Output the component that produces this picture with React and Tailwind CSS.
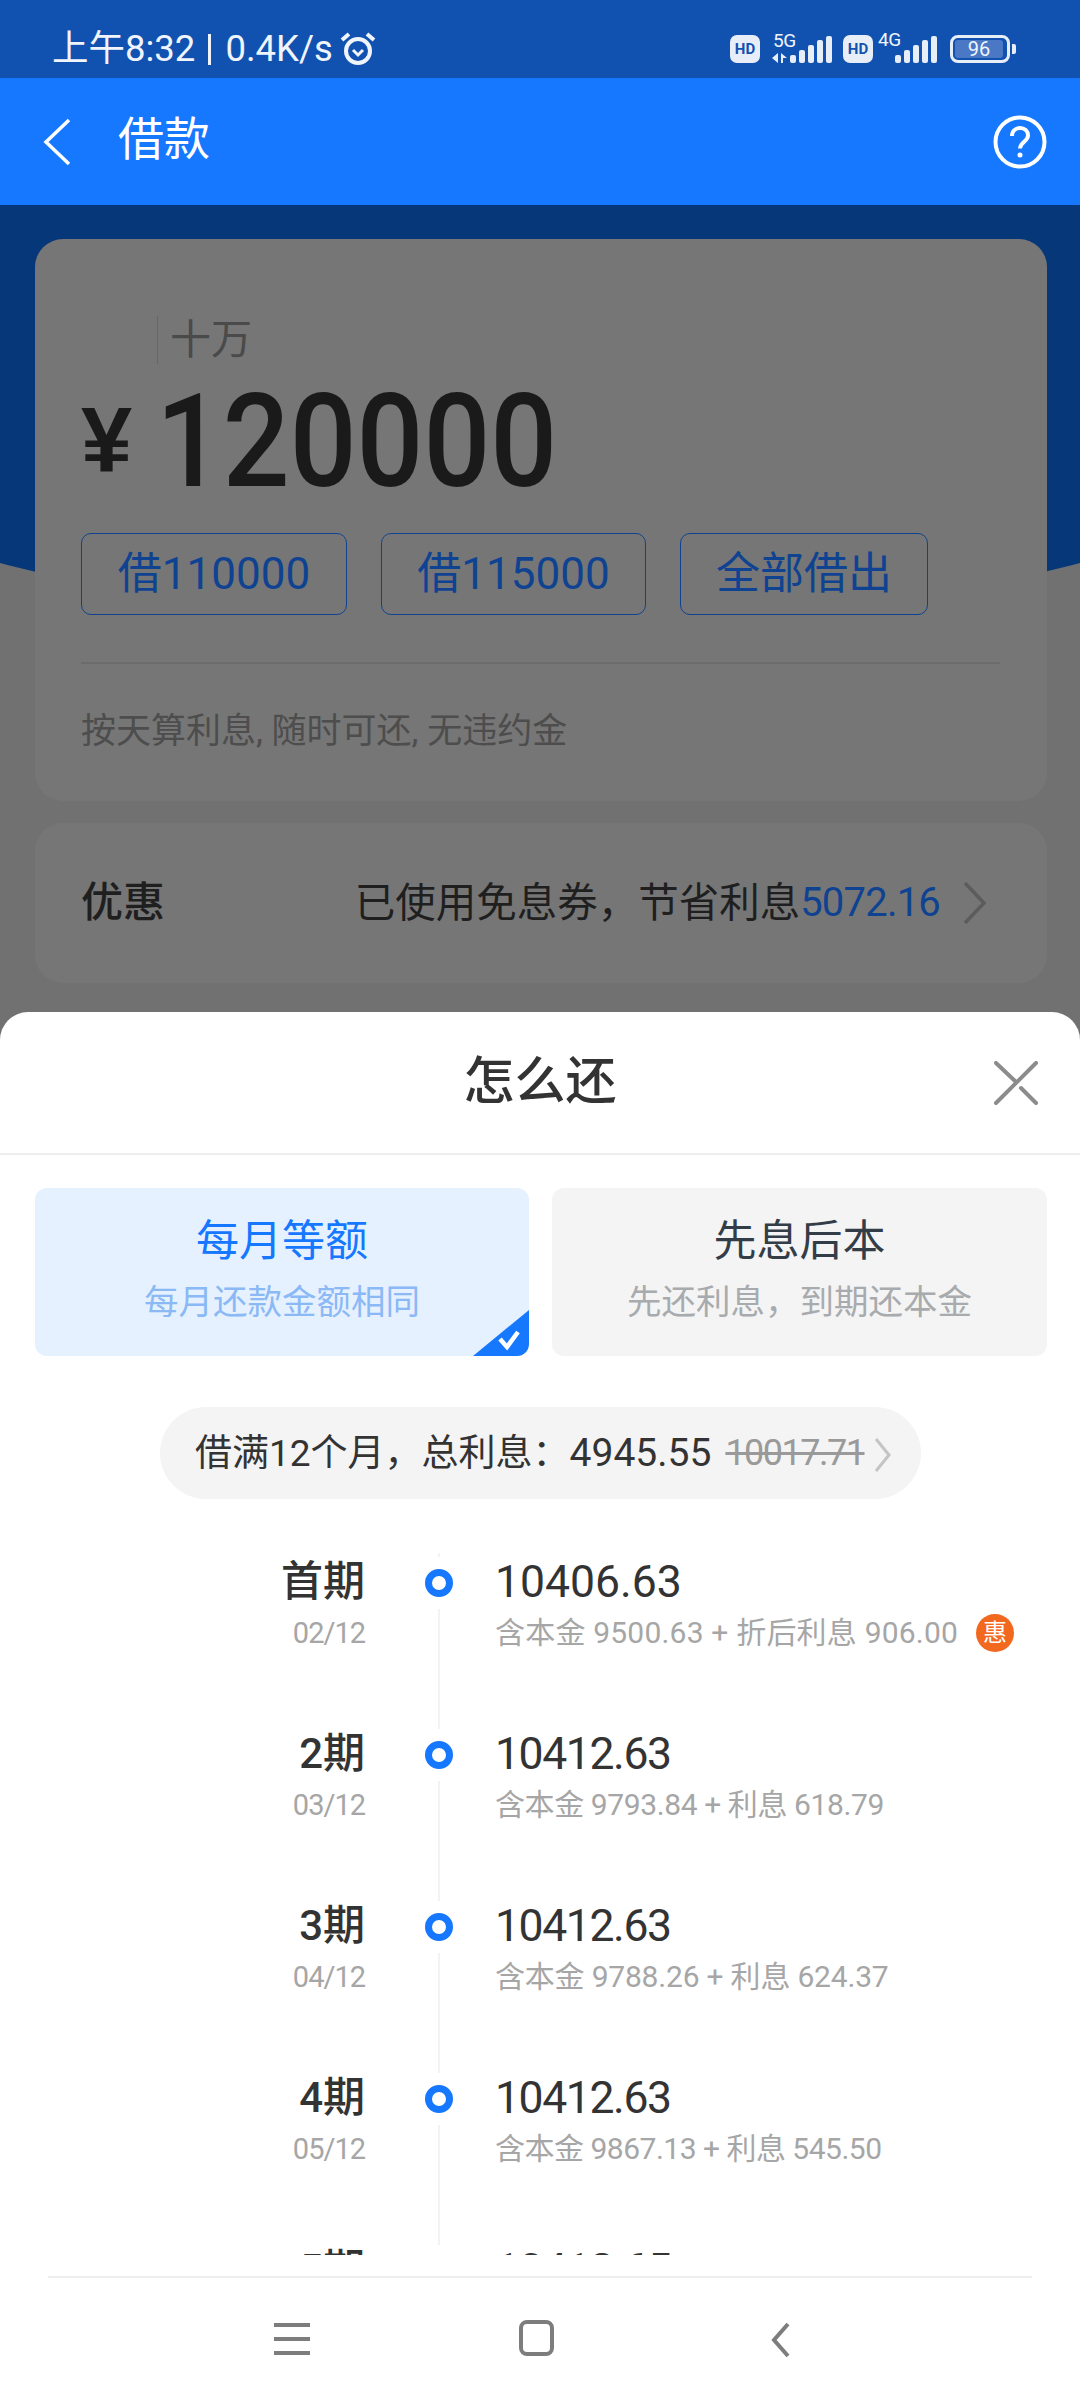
const FONT = "font-['Roboto','Noto_Sans_CJK_SC',sans-serif]";

const rows = [
  { p: "首期", d: "02/12", a: "10406.63", at: "tracking-[0px]", s: "含本金 9500.63 + 折后利息 906.00", st: "tracking-[0.2px]", hui: true },
  { p: "2期", d: "03/12", a: "10412.63", at: "tracking-[-1.4px]", s: "含本金 9793.84 + 利息 618.79", st: "tracking-[-0.4px]" },
  { p: "3期", d: "04/12", a: "10412.63", at: "tracking-[-1.4px]", s: "含本金 9788.26 + 利息 624.37", st: "tracking-[-0.2px]" },
  { p: "4期", d: "05/12", a: "10412.63", at: "tracking-[-1.4px]", s: "含本金 9867.13 + 利息 545.50", st: "tracking-[-0.5px]" },
  { p: "5期", a: "10412.65", at: "tracking-[-1.4px]" },
];

function Bars() {
  const h = [8, 13, 18, 23, 27];
  return (
    <div className="flex items-end gap-[3px]">
      {h.map((v) => (
        <div key={v} className="w-[6px] rounded-[2px] bg-[#e8eef8]" style={{ height: v }} />
      ))}
    </div>
  );
}

function HD() {
  return (
    <div className="w-[30px] h-[28px] rounded-[7px] bg-[#e8eef8] text-[#1252b0] text-[15px] font-bold flex items-center justify-center leading-none">HD</div>
  );
}

function StatusBar() {
  return (
    <div className="h-[78px] bg-[#1152b1] flex items-end justify-between pl-[52px] pr-[64px] pb-[9px] text-[#f0f4fb]">
      <div className="flex items-center h-[40px] text-[36.5px] leading-none">
        <span>上午8:32</span>
        <span className="w-[3px] h-[31px] bg-[#f0f4fb] ml-[13px] mr-[14px]" />
        <span>0.4K/s</span>
        <svg className="ml-[7px]" width="36" height="34" viewBox="0 0 36 34" fill="none" stroke="#f0f4fb">
          <circle cx="18" cy="19" r="12" strokeWidth="4" />
          <path d="M13 18l5 5 5-5" strokeWidth="3" />
          <path d="M2 8l7-6M34 8l-7-6" strokeWidth="4" />
        </svg>
      </div>
      <div className="flex items-end h-[40px] pb-[6px]">
        <HD />
        <div className="relative ml-[12px] w-[60px] h-[28px] flex items-end justify-end">
          <span className="absolute left-[1px] top-[-4px] text-[19px] leading-none tracking-[-0.5px]">5G</span>
          <svg className="absolute left-0 bottom-0" width="16" height="10" viewBox="0 0 16 10" fill="#e8eef8">
            <path d="M6 0v10L0 5zM9 0l6 5H11v5H9z" />
          </svg>
          <Bars />
        </div>
        <div className="ml-[11px]"><HD /></div>
        <div className="relative ml-[5px] w-[59px] h-[28px] flex items-end justify-end">
          <span className="absolute left-0 top-[-5px] text-[19px] leading-none tracking-[-0.5px]">4G</span>
          <Bars />
        </div>
        <div className="flex items-center ml-[13px]">
          <div className="w-[60px] h-[28px] rounded-[8px] border-[3px] border-[#e8eef8] p-[2px]">
            <div className="w-[48px] h-full rounded-[3px] bg-[#4a78c4] flex items-center justify-center text-[20px] leading-none">96</div>
          </div>
          <div className="w-[4px] h-[10px] rounded-r-[2px] bg-[#e8eef8] ml-[2px]" />
        </div>
      </div>
    </div>
  );
}

function NavBar() {
  return (
    <div className="h-[127px] bg-[#1677ff] flex items-center justify-between text-white pl-[42px] pr-[33px]">
      <div className="flex items-center">
        <svg width="30" height="48" viewBox="0 0 30 48" fill="none" stroke="#fff" strokeWidth="3.5">
          <path d="M27 2L4 24l23 22" />
        </svg>
        <span className="ml-[46px] mt-[-5px] text-[46px] leading-none">借款</span>
      </div>
      <svg width="54" height="54" viewBox="0 0 54 54" fill="none" stroke="#fff">
        <circle cx="27" cy="27" r="24.5" strokeWidth="4" />
        <path d="M19 21c0-5 3.500-8 8-8s8 3 8 7.500c0 6-8 6.500-8 13" strokeWidth="4" />
        <circle cx="27" cy="40" r="2.500" fill="#fff" stroke="none" />
      </svg>
    </div>
  );
}

function Backdrop() {
  return (
    <div className="relative h-[2195px] bg-[#717171] overflow-hidden">
      <div className="absolute left-[-200px] right-[-200px] top-0 h-[418px] bg-[#063778] rounded-b-[50%_190px]" />
      <div className="relative pl-[35px] pr-[33px] pt-[34px]">
        <div className="h-[562px] rounded-[28px] bg-[#767676] pl-[46px] pr-[47px]">
          <div className="flex h-[125px] items-end pl-[76px]">
            <div className="w-[1px] h-[48px] bg-[#666666]" />
            <span className="ml-[12px] mb-[2px] text-[41px] leading-[44px] text-[#4a4a4a]">十万</span>
          </div>
          <div className="flex items-center h-[112px] mt-[20px] text-[#1a1a1a]">
            <span className="w-[75px] text-[92px] font-bold leading-none font-['Liberation_Sans',sans-serif]">¥</span>
            <span className="origin-left scale-x-[0.905] mt-[3px] text-[130px] leading-none font-medium">120000</span>
          </div>
          <div className="flex mt-[37px] gap-[34px]">
            <div className="w-[266px] h-[82px] rounded-[10px] border border-[#0f4391] flex items-center justify-center text-[44px] text-[#0f4391] leading-none">借110000</div>
            <div className="w-[265px] h-[82px] rounded-[10px] border border-[#0f4391] flex items-center justify-center text-[44px] text-[#0f4391] leading-none">借115000</div>
            <div className="w-[248px] h-[82px] rounded-[10px] border border-[#0f4391] flex items-center justify-center text-[44px] text-[#0f4391] leading-none">全部借出</div>
          </div>
          <div className="mt-[47px] h-[2px] bg-[#6c6c6c]" />
          <div className="mt-[47px] text-[35px] leading-[42px] text-[#4d4d4d]">按天算利息, 随时可还, 无违约金</div>
        </div>
        <div className="mt-[22px] h-[160px] rounded-[28px] bg-[#767676] flex items-center justify-between pl-[46px] pr-[60px]">
          <span className="text-[42px] text-[#1f1f1f] font-medium leading-none">优惠</span>
          <div className="flex items-center">
            <span className="text-[40.5px] text-[#1f1f1f] leading-none">已使用免息券，节省利息</span>
            <span className="text-[40px] text-[#0f4391] leading-none tracking-[-0.800px]">5072.16</span>
            <svg className="ml-[23px]" width="24" height="42" viewBox="0 0 24 42" fill="none" stroke="#5c5c5c" strokeWidth="3.500">
              <path d="M2 1l19 20L2 41" />
            </svg>
          </div>
        </div>
      </div>
    </div>
  );
}

function Sheet() {
  return (
    <div className="absolute left-0 right-0 top-[1012px] h-[1388px] bg-white rounded-t-[28px]">
      <div className="relative h-[143px] border-b-2 border-[#eeeeee] flex items-center justify-center">
        <span className="text-[51px] text-[#333333] font-medium leading-none mt-[-2px]">怎么还</span>
        <svg className="absolute right-[42px] top-[49px]" width="44" height="44" viewBox="0 0 44 44" fill="none" stroke="#8c8c8c" strokeWidth="4" strokeLinecap="round">
          <path d="M2 42L42 2M2 2l19 18M27 27l15 15" />
        </svg>
      </div>
      <div className="flex gap-[23px] pl-[35px] mt-[33px]">
        <div className="relative w-[494px] h-[168px] rounded-[12px] bg-[#e6f1ff] overflow-hidden flex flex-col items-center pt-[28px]">
          <span className="text-[43px] leading-[50px] text-[#1677ff]">每月等额</span>
          <span className="mt-[16px] text-[34.5px] leading-[40px] text-[#8bb9f6]">每月还款金额相同</span>
          <svg className="absolute right-0 bottom-0" width="56" height="46" viewBox="0 0 56 46">
            <path d="M56 0V46H0z" fill="#1677ff" />
            <path d="M27 29l7 8 11-15" fill="none" stroke="#fff" strokeWidth="4.500" />
          </svg>
        </div>
        <div className="w-[495px] h-[168px] rounded-[12px] bg-[#f4f4f5] flex flex-col items-center pt-[28px]">
          <span className="text-[43px] leading-[50px] text-[#333d48]">先息后本</span>
          <span className="mt-[16px] text-[34.5px] leading-[40px] text-[#a8abae]">先还利息，到期还本金</span>
        </div>
      </div>
      <div className="mt-[51px] pl-[160px]">
        <div className="w-[761px] h-[92px] rounded-full bg-[#f4f4f5] flex items-center pl-[35px]">
          <span className="text-[37px] text-[#333333] leading-none">借满12个月，总利息：</span>
          <span className="text-[39px] text-[#333333] leading-none">4945.55</span>
          <span className="ml-[14px] text-[36px] text-[#9a9a9a] leading-none line-through tracking-[-1.500px]">10017.71</span>
          <svg className="ml-[9px] mt-[4px]" width="18" height="34" viewBox="0 0 18 34" fill="none" stroke="#c4c4c4" strokeWidth="3">
            <path d="M2 1l13 16L2 33" />
          </svg>
        </div>
      </div>
      <div className="relative mt-[54px] h-[702px] overflow-hidden">
        <div className="absolute left-[438px] top-0 bottom-0 w-[2px] bg-[#f3f3f3]" />
        {rows.map(({ p, d, a, at, s, st, hui }) => (
          <div key={p} className="relative h-[172px] flex">
            <div className="w-[365px] flex flex-col items-end pt-[5px]">
              <span className="text-[42px] leading-[48px] font-medium text-[#333333]">{p}</span>
              {d && <span className="mt-[10px] text-[29px] leading-[34px] text-[#a6a6a6] tracking-[-1px]">{d}</span>}
            </div>
            <div className="w-[74px] relative">
              <div className="absolute left-[60px] top-[16px] w-[28px] h-[28px] rounded-full border-[7px] border-[#1677ff] bg-white shadow-[0_0_0_12px_#ffffff]" />
            </div>
            <div className="ml-[56px] flex flex-col pt-[5px] min-w-0">
              <span className={`text-[44.5px] leading-[48px] text-[#333333] ${at}`}>{a}</span>
              {s && (
                <div className="mt-[10px] flex items-center h-[34px]">
                  <span className={`text-[30px] leading-[34px] text-[#a6a6a6] whitespace-nowrap ${st}`}>{s}</span>
                  {hui && <span className="ml-[18px] w-[38px] h-[38px] rounded-full bg-[#f2681f] text-white text-[24px] flex items-center justify-center leading-none">惠</span>}
                </div>
              )}
            </div>
          </div>
        ))}
      </div>
      <div className="mx-[48px] mt-[21px] h-[2px] bg-[#eeeeee]" />
      <div className="relative h-[122px]">
        <div className="absolute left-[274px] top-[45px] w-[36px] flex flex-col gap-[10px]">
          <div className="h-[4px] bg-[#7d7d7d]" />
          <div className="h-[4px] bg-[#7d7d7d]" />
          <div className="h-[4px] bg-[#7d7d7d]" />
        </div>
        <div className="absolute left-[519px] top-[42px] w-[35px] h-[36px] rounded-[8px] border-[4px] border-[#7d7d7d]" />
        <svg className="absolute left-[768px] top-[44px]" width="24" height="36" viewBox="0 0 24 36" fill="none" stroke="#7d7d7d" strokeWidth="4">
          <path d="M20 2L6 18l14 16" />
        </svg>
      </div>
    </div>
  );
}

export default function App() {
  return (
    <div className={`relative w-[1080px] h-[2400px] overflow-hidden ${FONT}`}>
      <StatusBar />
      <NavBar />
      <Backdrop />
      <Sheet />
    </div>
  );
}
